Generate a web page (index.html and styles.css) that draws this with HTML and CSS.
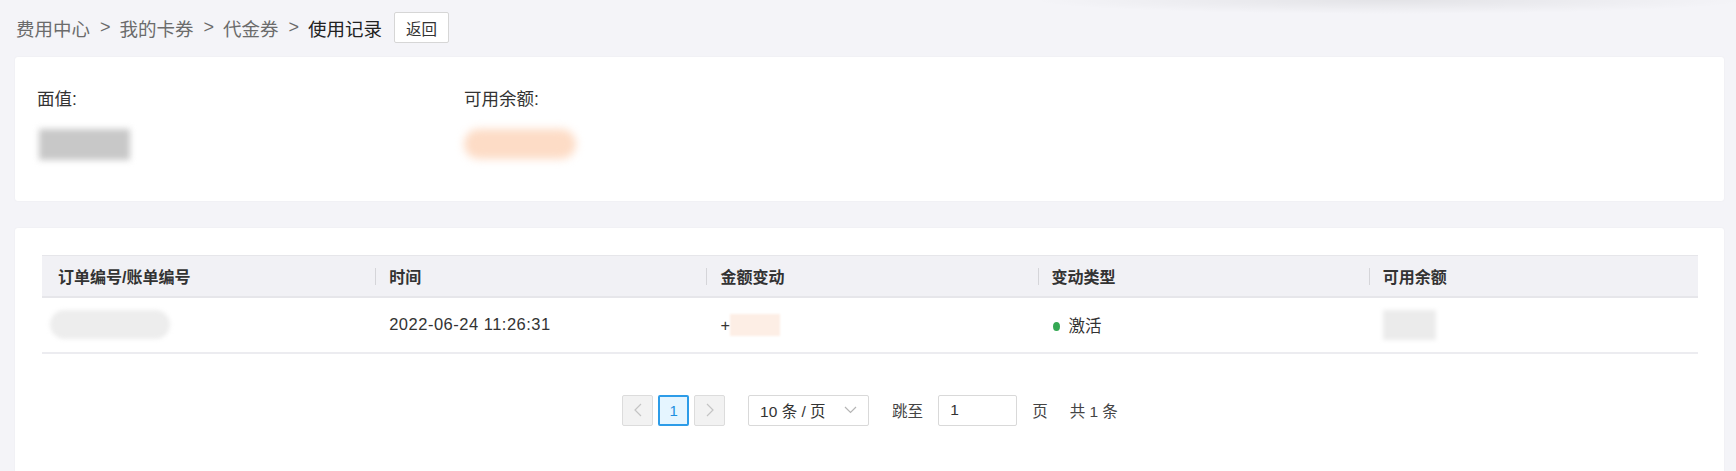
FILE: index.html
```html
<!DOCTYPE html>
<html lang="zh-CN">
<head>
<meta charset="utf-8">
<title>使用记录</title>
<link rel="stylesheet" href="styles.css">
</head>
<body>
<div class="page">
  <div class="crumbs">
    <span class="crumb">费用中心</span><span class="sep">&gt;</span>
    <span class="crumb">我的卡券</span><span class="sep">&gt;</span>
    <span class="crumb">代金券</span><span class="sep">&gt;</span>
    <span class="crumb current">使用记录</span>
    <button class="back-btn">返回</button>
  </div>

  <section class="card summary">
    <div class="stat stat-face">
      <div class="stat-label">面值:</div>
      <div class="blur blur-gray"></div>
    </div>
    <div class="stat">
      <div class="stat-label">可用余额:</div>
      <div class="blur blur-orange"></div>
    </div>
  </section>

  <section class="card records">
    <table class="table">
      <thead>
        <tr>
          <th>订单编号/账单编号</th>
          <th><span class="divider"></span>时间</th>
          <th><span class="divider"></span>金额变动</th>
          <th><span class="divider"></span>变动类型</th>
          <th><span class="divider"></span>可用余额</th>
        </tr>
      </thead>
      <tbody>
        <tr>
          <td><div class="blur blur-pill"></div></td>
          <td class="date">2022-06-24 11:26:31</td>
          <td><span class="plus">+</span><span class="blur blur-peach"></span></td>
          <td><span class="dot"></span>激活</td>
          <td><div class="blur blur-light"></div></td>
        </tr>
      </tbody>
    </table>

    <div class="pager">
      <div class="pages">
        <span class="pg-btn disabled">
          <svg width="8" height="14" viewBox="0 0 8 14"><path d="M7 1 1 7l6 6" fill="none" stroke="#c4c4c4" stroke-width="1.2"/></svg>
        </span>
        <span class="pg-btn active">1</span>
        <span class="pg-btn disabled">
          <svg width="8" height="14" viewBox="0 0 8 14"><path d="M1 1l6 6-6 6" fill="none" stroke="#c4c4c4" stroke-width="1.2"/></svg>
        </span>
      </div>
      <div class="select">
        <span>10 条 / 页</span>
        <svg width="13" height="8" viewBox="0 0 13 8"><path d="M1 1l5.5 5.5L12 1" fill="none" stroke="#b5b5b5" stroke-width="1.2"/></svg>
      </div>
      <div class="jump">
        <span>跳至</span>
        <span class="jump-input">1</span>
        <span>页</span>
      </div>
      <span class="total">共 1 条</span>
    </div>
  </section>
</div>
</body>
</html>
```
FILE: styles.css
```css
* { box-sizing: border-box; }

html, body {
  margin: 0;
  height: 100%;
}

body {
  font-family: "Liberation Sans", "Noto Sans CJK SC", sans-serif;
  color: #333;
  background:
    radial-gradient(ellipse 360px 14px at 1390px 0, rgba(0, 0, 0, 0.07), rgba(0, 0, 0, 0)),
    #f4f4f8;
  overflow: hidden;
}

.page {
  padding: 12px 12px 0 15px;
}

/* breadcrumb */
.crumbs {
  display: flex;
  align-items: center;
  height: 31px;
  font-size: 18.5px;
  color: #6b6b6b;
  padding-left: 1px;
}
.sep {
  margin: 0 9px 0 10px;
  font-size: 18px;
}
.crumb.current { color: #222; }
.back-btn {
  margin-left: 12px;
  height: 31px;
  width: 55px;
  padding: 0;
  font-family: inherit;
  font-size: 15.5px;
  color: #333;
  background: #fff;
  border: 1px solid #d6d6d6;
  border-radius: 2px;
}

/* cards */
.card {
  background: #fff;
  border-radius: 3px;
  box-shadow: 0 0 2px rgba(0, 0, 0, 0.05);
}

.summary {
  margin-top: 14px;
  height: 144px;
  display: flex;
  padding: 30px 22px 0 22px;
}
.stat {
  display: flex;
  flex-direction: column;
  gap: 18px;
}
.stat-face { width: 427px; }
.stat-label {
  font-size: 17.5px;
  line-height: 24px;
  color: #333;
}

/* blurred (redacted) values */
.blur { display: inline-block; }
.blur-gray {
  margin-left: 2px;
  width: 91px;
  height: 31px;
  background: #c8c8c8;
  filter: blur(3px);
}
.blur-orange {
  width: 112px;
  height: 30px;
  border-radius: 15px;
  background: #fddcc6;
  filter: blur(4px);
}
.blur-pill {
  display: block;
  margin-left: -8px;
  width: 120px;
  height: 29px;
  border-radius: 15px;
  background: #ededed;
  filter: blur(2px);
}
.blur-peach {
  width: 50px;
  height: 22px;
  background: #fdeee5;
  vertical-align: middle;
  filter: blur(1px);
}
.blur-light {
  display: block;
  width: 53px;
  height: 30px;
  background: #ebebeb;
  filter: blur(2px);
}

/* records */
.records {
  margin-top: 27px;
  padding: 27px 26px 60px 27px;
  min-height: 260px;
}
.table {
  width: 100%;
  border-collapse: collapse;
  table-layout: fixed;
}
.table th {
  position: relative;
  height: 41px;
  padding: 0 16px;
  text-align: left;
  font-size: 16px;
  font-weight: 700;
  color: #333;
  background: #f1f1f5;
  border-top: 1px solid #e6e6ea;
  border-bottom: 2px solid #e6e6ea;
}
.divider {
  position: absolute;
  left: 2px;
  top: 12px;
  width: 1px;
  height: 17px;
  background: #d5d5d9;
}
.table td {
  height: 56px;
  padding: 0 16px;
  font-size: 16.5px;
  color: #333;
  border-bottom: 2px solid #ececf0;
}
.table td.date { letter-spacing: 0.5px; }
.plus { vertical-align: middle; }
.dot {
  display: inline-block;
  width: 7px;
  height: 9px;
  border-radius: 50%;
  background: #34a853;
  margin: 0 9px 1px 1px;
  vertical-align: middle;
}

/* pagination */
.pager {
  margin-top: 41px;
  display: flex;
  justify-content: center;
  align-items: center;
  font-size: 15.5px;
  color: #444;
}
.pages {
  display: flex;
  gap: 5px;
  margin-right: 23px;
}
.pg-btn {
  display: flex;
  align-items: center;
  justify-content: center;
  width: 31px;
  height: 31px;
  border: 1px solid #dcdcdc;
  border-radius: 2px;
  background: #fff;
}
.pg-btn.disabled { background: #f2f2f2; }
.pg-btn.active {
  background: #e5f5ff;
  border: 2px solid #2d9ce8;
  color: #1d8fe0;
  font-size: 15px;
}
.select {
  display: flex;
  align-items: center;
  justify-content: space-between;
  width: 121px;
  height: 31px;
  padding: 0 11px;
  border: 1px solid #d9d9d9;
  border-radius: 2px;
  color: #333;
}
.jump {
  display: flex;
  align-items: center;
  gap: 15px;
  margin-left: 23px;
}
.jump-input {
  display: flex;
  align-items: center;
  width: 79px;
  height: 31px;
  padding-left: 11px;
  border: 1px solid #d9d9d9;
  border-radius: 2px;
  color: #333;
}
.total { margin-left: 22px; }
```
